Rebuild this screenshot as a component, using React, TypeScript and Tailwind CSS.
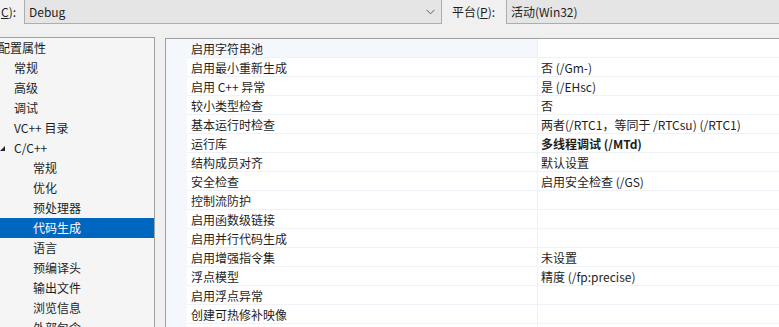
import React from 'react';

type TreeItem = { label: string; level: number; expanded?: boolean; selected?: boolean };

const tree: TreeItem[] = [
  { label: '配置属性', level: 0 },
  { label: '常规', level: 1 },
  { label: '高级', level: 1 },
  { label: '调试', level: 1 },
  { label: 'VC++ 目录', level: 1 },
  { label: 'C/C++', level: 1, expanded: true },
  { label: '常规', level: 2 },
  { label: '优化', level: 2 },
  { label: '预处理器', level: 2 },
  { label: '代码生成', level: 2, selected: true },
  { label: '语言', level: 2 },
  { label: '预编译头', level: 2 },
  { label: '输出文件', level: 2 },
  { label: '浏览信息', level: 2 },
  { label: '外部包含', level: 2 },
];

type Prop = { name: string; value: string; bold?: boolean; current?: boolean };

const props: Prop[] = [
  { name: '启用字符串池', value: '', current: true },
  { name: '启用最小重新生成', value: '否 (/Gm-)' },
  { name: '启用 C++ 异常', value: '是 (/EHsc)' },
  { name: '较小类型检查', value: '否' },
  { name: '基本运行时检查', value: '两者(/RTC1，等同于 /RTCsu) (/RTC1)' },
  { name: '运行库', value: '多线程调试 (/MTd)', bold: true },
  { name: '结构成员对齐', value: '默认设置' },
  { name: '安全检查', value: '启用安全检查 (/GS)' },
  { name: '控制流防护', value: '' },
  { name: '启用函数级链接', value: '' },
  { name: '启用并行代码生成', value: '' },
  { name: '启用增强指令集', value: '未设置' },
  { name: '浮点模型', value: '精度 (/fp:precise)' },
  { name: '启用浮点异常', value: '' },
  { name: '创建可热修补映像', value: '' },
  { name: '', value: '' },
];

const indent = ['pl-0', 'pl-[14px]', 'pl-[33px]'];

const Chevron = () => (
  <svg width="9" height="6" viewBox="0 0 9 6" className="shrink-0">
    <path d="M0.5 0.8 L4.5 4.8 L8.5 0.8" fill="none" stroke="#606060" strokeWidth="1" />
  </svg>
);

export default function App() {
  return (
    <div
      className="w-[779px] h-[327px] overflow-hidden bg-[#f0f0f0] text-[12px] text-[#1e1e1e] flex flex-col"
      style={{ fontFamily: '"Noto Sans CJK SC", "Noto Sans", sans-serif' }}
    >
      {/* 顶部选择栏 */}
      <div className="h-[37px] shrink-0 flex items-start">
        <div className="w-[24px] h-[24px] flex items-center pl-[1px]">
          <span><span className="underline">C</span>):</span>
        </div>
        <div className="w-[418px] h-[25px] -mt-px border border-[#adadad] bg-[#e5e5e5] flex items-center pl-[4px] pr-[6px]">
          <span className="flex-1">Debug</span>
          <Chevron />
        </div>
        <div className="w-[64px] h-[24px] flex items-center pl-[10px]">
          <span>平台(<span className="underline">P</span>):</span>
        </div>
        <div className="flex-1 h-[25px] -mt-px border border-r-0 border-[#adadad] bg-[#e5e5e5] flex items-center pl-[4px]">
          活动(Win32)
        </div>
      </div>

      <div className="flex-1 flex min-h-0">
        {/* 左侧树 */}
        <div className="w-[155px] shrink-0 border-t border-r border-[#a0a0a0] bg-[#f5f5f5] overflow-hidden">
          {tree.map((item, i) => (
            <div
              key={i}
              className={`h-[20px] flex items-center whitespace-nowrap relative ${indent[item.level]} ${
                item.selected ? 'bg-[#0067c0] text-white' : ''
              }`}
            >
              {item.expanded && (
                <svg width="5" height="5" viewBox="0 0 5 5" className="absolute left-0 top-[8px]">
                  <path d="M5 0 L5 5 L0 5 Z" fill="#262626" />
                </svg>
              )}
              <span className={item.level === 0 ? '-ml-[2px]' : ''}>{item.label}</span>
            </div>
          ))}
        </div>

        {/* 右侧属性表 */}
        <div className="flex-1 ml-[10px] mt-px border-t border-l border-[#a0a0a0] bg-[#f4f7fb] overflow-hidden">
          {props.map((p, i) => (
            <div key={i} className="h-[19px] flex">
              <div className="w-[21px] shrink-0" />
              <div
                className={`w-[350px] shrink-0 border-b border-[#eef1f7] pl-[4px] pt-px flex items-center whitespace-nowrap ${
                  p.current ? 'bg-[#f4f7fb]' : 'bg-white'
                }`}
              >
                {p.name}
              </div>
              <div className="flex-1 border-b border-l border-[#eef1f7] bg-white pl-[3px] pt-px flex items-center whitespace-nowrap">
                <span className={p.bold ? 'font-bold' : ''}>{p.value}</span>
              </div>
            </div>
          ))}
        </div>
      </div>
    </div>
  );
}
